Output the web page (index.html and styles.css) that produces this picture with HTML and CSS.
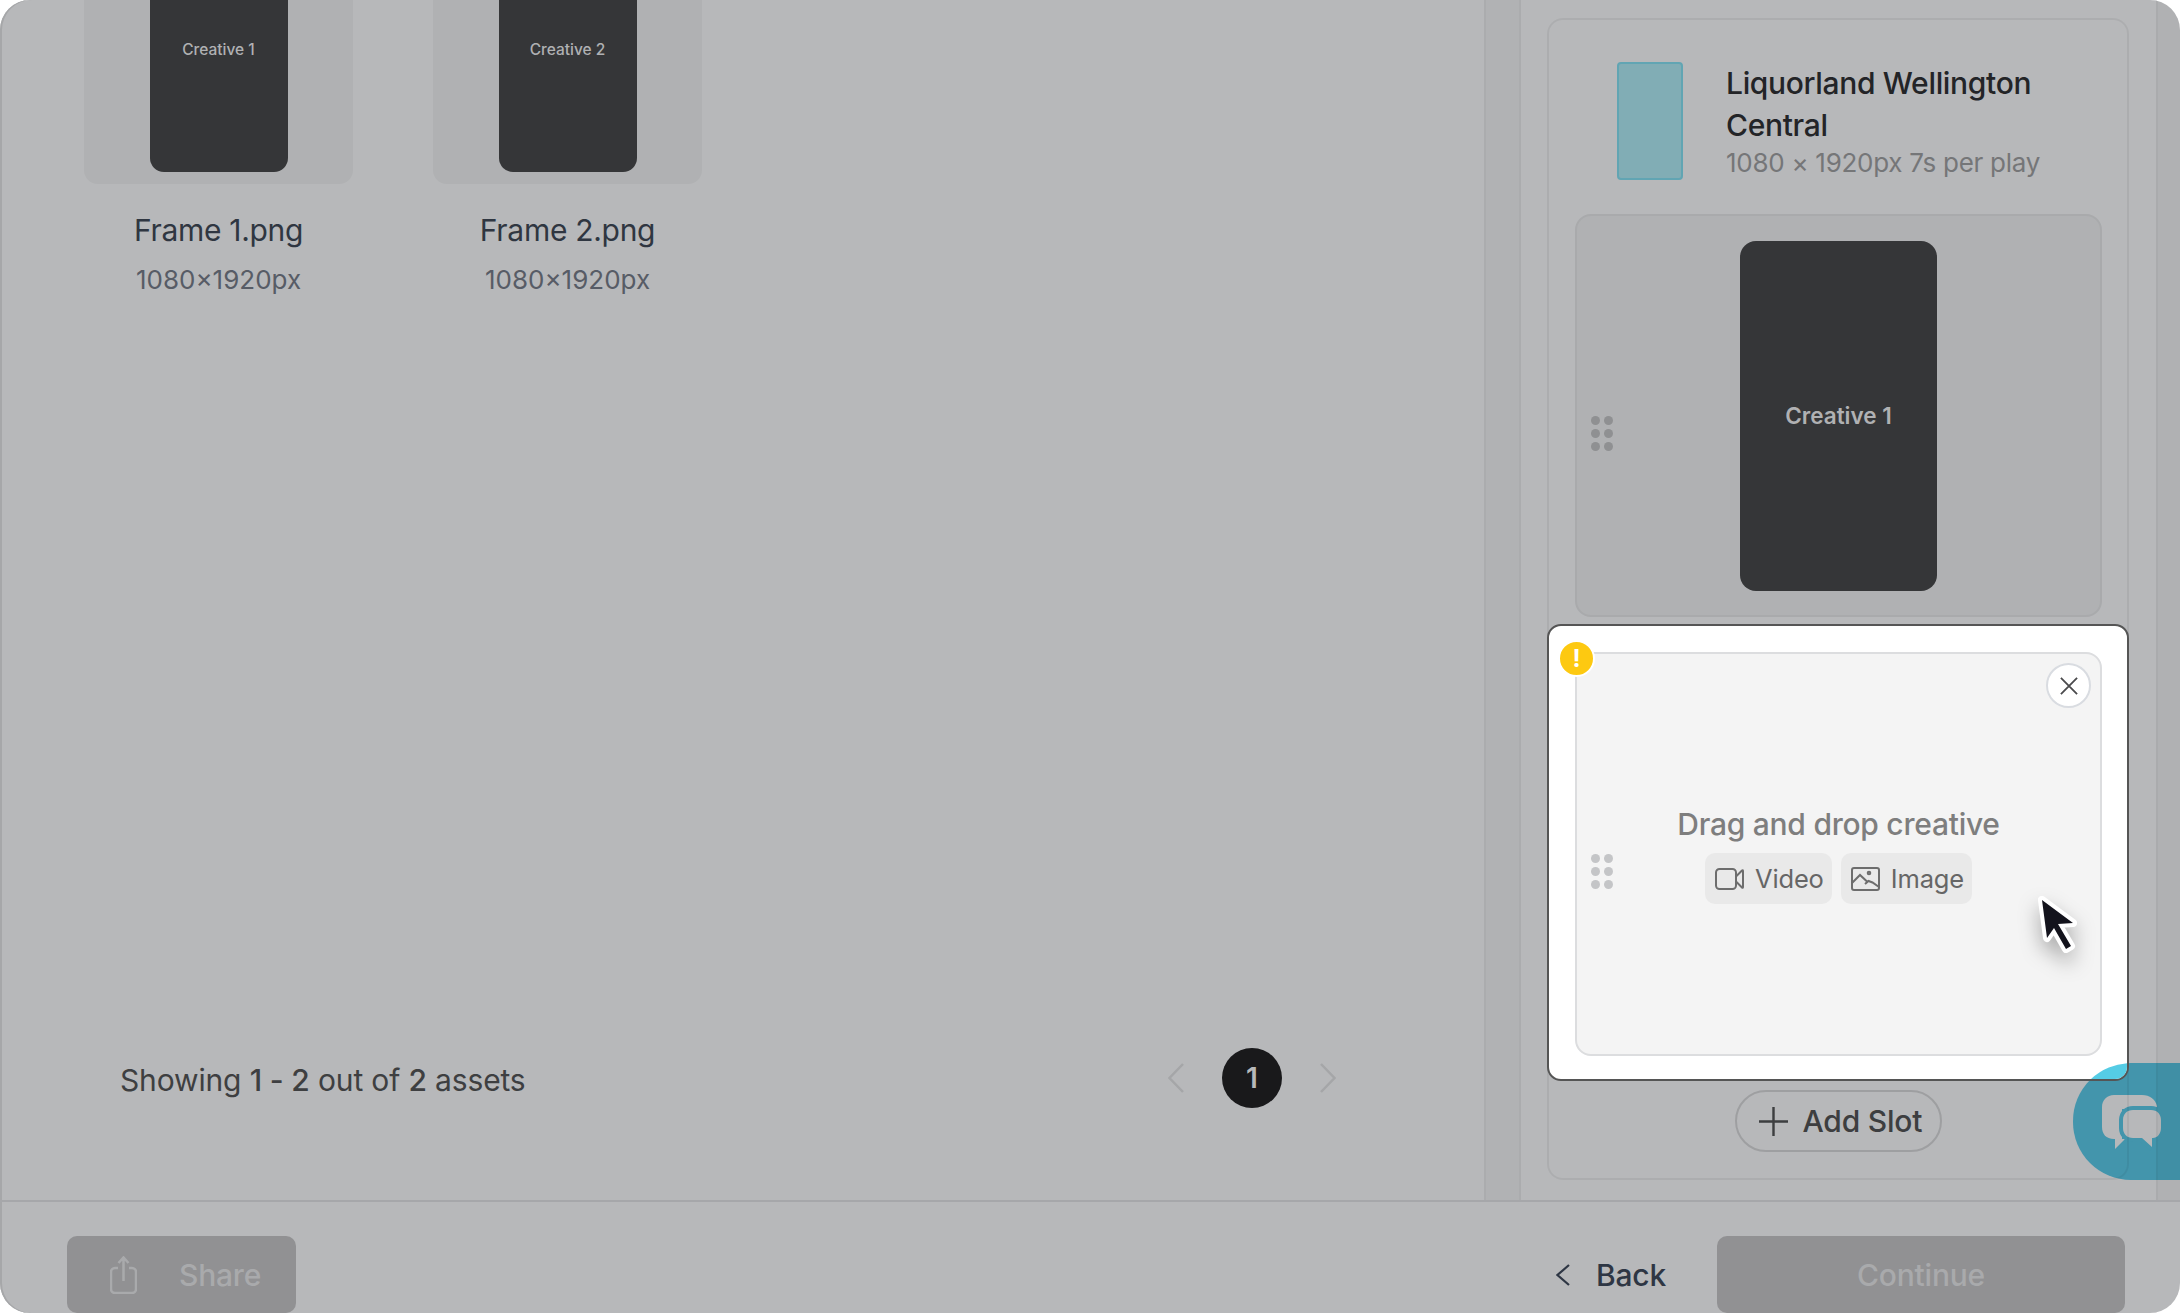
FILE: index.html
```html
<!DOCTYPE html>
<html lang="en">
<head>
<meta charset="utf-8">
<title>Creative slots</title>
<link rel="stylesheet" href="styles.css">
</head>
<body>
<div class="app">
  <div class="main">
    <section class="library">
      <div class="assets">
        <article class="asset">
          <div class="thumb"><div class="thumb-art">Creative 1</div></div>
          <div class="asset-name">Frame 1.png</div>
          <div class="asset-meta">1080×1920px</div>
        </article>
        <article class="asset">
          <div class="thumb"><div class="thumb-art">Creative 2</div></div>
          <div class="asset-name">Frame 2.png</div>
          <div class="asset-meta">1080×1920px</div>
        </article>
      </div>
      <div class="pager-row">
        <div class="showing">Showing <b>1 - 2</b> out of <b>2</b> assets</div>
        <div class="pager">
          <svg class="chev" viewBox="0 0 16 30"><path d="M15 1 1.500 15 15 29"/></svg>
          <div class="page">1</div>
          <svg class="chev" viewBox="0 0 16 30"><path d="M1 1 14.500 15 1 29"/></svg>
        </div>
      </div>
    </section>
    <div class="strip"></div>
    <aside class="panel">
      <div class="card">
        <header class="head">
          <div class="swatch"></div>
          <div class="head-text">
            <div class="title">Liquorland Wellington Central</div>
            <div class="sub">1080 × 1920px 7s per play</div>
          </div>
        </header>
        <div class="slot slot-filled">
          <div class="dots"><i></i><i></i><i></i><i></i><i></i><i></i></div>
          <div class="slot-art">Creative 1</div>
        </div>
        <div class="selected">
          <div class="chat-bright"></div>
          <div class="slot slot-empty">
            <div class="dots dots-light"><i></i><i></i><i></i><i></i><i></i><i></i></div>
            <div class="drop-title">Drag and drop creative</div>
            <div class="drop-btns">
              <div class="drop-btn">
                <svg class="ico-video" viewBox="0 0 29 22"><rect x="1" y="1" width="20" height="20" rx="3.500"/><path d="M21 8.500 27 2.500c.6-.6 1-.4 1 .5v16c0 .9-.4 1.100-1 .5L21 13.500"/></svg>
                <span>Video</span>
              </div>
              <div class="drop-btn">
                <svg class="ico-image" viewBox="0 0 29 24"><rect x="1" y="1" width="27" height="22" rx="2"/><path d="M1 16 9 8l7 6.500M14 17l3.500-3 4 1.500 6.500 4.500"/><circle cx="18" cy="6" r="1.300"/></svg>
                <span>Image</span>
              </div>
            </div>
          </div>
          <div class="warn">!</div>
          <div class="close"><svg viewBox="0 0 20 20"><path d="M1 1 19 19M19 1 1 19"/></svg></div>
        </div>
        <div class="add-slot">
          <svg viewBox="0 0 30 30"><path d="M15 0V30M0 15H30"/></svg>
          <span>Add Slot</span>
        </div>
      </div>
    </aside>
    <div class="edge"></div>
  </div>
  <footer class="footer">
    <div class="btn share">
      <svg viewBox="0 0 27 38"><path d="M8 12H5a4 4 0 0 0-4 4v17a4 4 0 0 0 4 4h17a4 4 0 0 0 4-4V16a4 4 0 0 0-4-4h-3M13.500 25V1.500M8.500 7l5-5.500 5 5.500"/></svg>
      <span>Share</span>
    </div>
    <div class="footer-right">
      <div class="back">
        <svg viewBox="0 0 14 22"><path d="M13 1 1.500 11 13 21"/></svg>
        <span>Back</span>
      </div>
      <div class="btn continue">Continue</div>
    </div>
  </footer>
  <div class="chat">
    <svg viewBox="0 0 60 56">
      <path class="chat-back" d="M12 0H40C48 0 53 4 55 11L55 14H20V44H23L13 54V44H12C4 44 0 39 0 32V12C0 5 5 0 12 0Z"/>
      <path class="chat-front" d="M31 15H49C55 15 59 19 59 25V33C59 39 55 43 51 43H50V52L40 43H31C25 43 21 39 21 33V25C21 19 25 15 31 15Z"/>
    </svg>
  </div>
  <svg class="cursor" viewBox="0 0 70 85"><path d="M22 20 53 43 38 44 51 66 46 69 34 48 27 58Z"/></svg>
</div>
</body>
</html>
```

FILE: styles.css
```css
* { box-sizing: border-box; }
html, body { margin: 0; padding: 0; background: #fff; }
body { font-family: Inter, "Liberation Sans", sans-serif; }

.app {
  position: relative;
  width: 2180px;
  height: 1313px;
  overflow: hidden;
  border-radius: 30px;
  background: #b7b8ba;
  box-shadow: inset 2px 0 0 #a6a7a9;
  display: flex;
  flex-direction: column;
}
.main { position: relative; z-index: 1; height: 1200px; display: flex; }

/* library */
.library { width: 1484px; display: flex; flex-direction: column; justify-content: space-between; }
.assets { display: flex; gap: 80px; padding-left: 84px; }
.asset { width: 269px; display: flex; flex-direction: column; align-items: center; }
.thumb {
  width: 100%;
  height: 184px;
  padding-bottom: 12px;
  display: flex;
  justify-content: center;
  background: #b0b1b3;
  border-radius: 0 0 14px 14px;
}
.thumb-art {
  width: 138px;
  padding-top: 40px;
  background: #353638;
  border-radius: 0 0 14px 14px;
  color: #b0b1b3;
  font-size: 15.500px;
  line-height: 20px;
  font-weight: 500;
  text-align: center;
}
.asset-name { margin-top: 27px; font-size: 30px; line-height: 38px; letter-spacing: -.3px; color: #2f3641; }
.asset-meta { margin-top: 13px; font-size: 26px; line-height: 36px; color: #575c66; }

.pager-row {
  display: flex;
  justify-content: space-between;
  align-items: center;
  padding: 0 148px 92px 120px;
}
.showing { padding-top: 3px; font-size: 30px; line-height: 40px; letter-spacing: -.15px; color: #3e3f41; }
.showing b { font-weight: 500; }
.pager { display: flex; align-items: center; gap: 38px; }
.chev { width: 16px; height: 30px; fill: none; stroke: #a5a6a8; stroke-width: 2.500; }
.page {
  width: 60px;
  height: 60px;
  border-radius: 50%;
  background: #19191b;
  color: #b7b8ba;
  font-size: 28px;
  font-weight: 600;
  display: flex;
  align-items: center;
  justify-content: center;
}

.strip {
  width: 37px;
  background: #b1b2b4;
  border-left: 2px solid #abacae;
  border-right: 2px solid #abacae;
}
.edge { flex: 1; background: rgba(0,0,0,.035); border-left: 2px solid rgba(0,0,0,.03); }

/* right panel */
.panel { width: 635px; padding: 18px 27px 20px 26px; display: flex; }
.card {
  width: 100%;
  border-radius: 16px;
  box-shadow: inset 0 0 0 2px rgba(0,0,0,.055);
  display: flex;
  flex-direction: column;
  align-items: stretch;
}
.head { display: flex; gap: 43px; padding: 44px 60px 34px 70px; height: 196px; }
.swatch {
  width: 66px;
  height: 118px;
  flex: none;
  background: #81adb5;
  border: 2px solid #61a5b3;
  border-radius: 4px;
}
.title { font-size: 30px; line-height: 42px; font-weight: 500; letter-spacing: -.33px; color: #232427; }
.sub { font-size: 26px; line-height: 34px; letter-spacing: -.28px; color: #757678; }

.slot { position: relative; border-radius: 16px; display: flex; flex-direction: column; align-items: center; }
.slot-filled {
  height: 403px;
  margin: 0 27px 0 28px;
  justify-content: center;
  background: #b0b1b3;
  border: 2px solid #a9aaac;
}
.slot-art {
  width: 197px;
  height: 350px;
  background: #353638;
  border-radius: 16px;
  color: #b0b1b3;
  font-size: 22.500px;
  font-weight: 600;
  display: flex;
  align-items: center;
  justify-content: center;
}
.dots {
  position: absolute;
  left: 14px;
  top: 50%;
  width: 22px;
  display: grid;
  grid-template-columns: 9px 9px;
  gap: 4px;
}
.dots i { width: 9px; height: 9px; border-radius: 50%; background: #8f9092; }
.dots-light i { background: #c4c5c7; }

.selected {
  position: relative;
  height: 457px;
  margin-top: 7px;
  padding: 26px 25px 0 26px;
  background: #fff;
  border: 2px solid #555;
  border-radius: 14px;
  overflow: hidden;
}
.chat-bright {
  position: absolute;
  left: 524px;
  top: 437px;
  width: 107px;
  height: 117px;
  border-radius: 58px 0 0 58px;
  background: #55cce5;
}
.slot-empty {
  height: 404px;
  justify-content: center;
  padding-top: 2px;
  background: #f4f4f4;
  border: 2px solid #dcdddf;
}
.drop-title { font-size: 30px; line-height: 36px; font-weight: 500; letter-spacing: -.25px; color: #7e7e7e; }
.drop-btns { display: flex; gap: 9px; margin-top: 11px; }
.drop-btn {
  height: 51px;
  padding: 0 8px 0 10px;
  display: flex;
  align-items: center;
  gap: 11px;
  background: #e9e9e9;
  border-radius: 10px;
  font-size: 25.500px;
  letter-spacing: -.15px;
  color: #666;
}
.ico-video, .ico-image { fill: none; stroke: #6d6d6d; stroke-width: 2; }
.ico-video { width: 29px; height: 22px; }
.ico-image { width: 29px; height: 24px; }
.warn {
  position: absolute;
  left: 9px;
  top: 14px;
  width: 37px;
  height: 37px;
  border: 2px solid #fff;
  border-radius: 50%;
  background: #fdc911;
  color: #fff;
  font-size: 24px;
  font-weight: 700;
  line-height: 33px;
  text-align: center;
}
.close {
  position: absolute;
  left: 497px;
  top: 37px;
  width: 45px;
  height: 45px;
  padding: 11.500px;
  background: #fff;
  border: 2px solid #d9dce1;
  border-radius: 50%;
  display: flex;
}
.close svg { width: 100%; height: 100%; fill: none; stroke: #4a4a4c; stroke-width: 2; }

.add-slot {
  align-self: center;
  width: 207px;
  height: 62px;
  margin-top: 9px;
  padding-left: 22px;
  display: flex;
  align-items: center;
  gap: 15px;
  border: 2px solid #9e9fa1;
  border-radius: 31px;
  font-size: 30px;
  font-weight: 500;
  letter-spacing: -.2px;
  color: #3d3e40;
}
.add-slot svg { width: 29px; height: 29px; fill: none; stroke: #3d3e40; stroke-width: 2.500; }

/* footer */
.footer {
  position: relative;
  z-index: 1;
  height: 113px;
  padding: 34px 55px 0 67px;
  border-top: 2px solid #a6a7aa;
  display: flex;
  justify-content: space-between;
}
.btn {
  height: 77px;
  border-radius: 10px;
  background: #919193;
  color: #a9aaac;
  font-size: 30px;
  font-weight: 500;
  letter-spacing: -.2px;
  display: flex;
  align-items: center;
}
.share { width: 229px; padding-left: 43px; gap: 42px; }
.share svg { width: 27px; height: 38px; fill: none; stroke: #a9aaac; stroke-width: 2.500; }
.footer-right { display: flex; gap: 51px; }
.back { display: flex; align-items: center; gap: 26px; font-size: 30px; font-weight: 500; letter-spacing: -.2px; color: #2e3644; }
.back svg { width: 14px; height: 22px; fill: none; stroke: #2e3644; stroke-width: 2.200; }
.continue { width: 408px; justify-content: center; }

/* floating */
.chat {
  position: absolute;
  right: 0;
  top: 1063px;
  width: 107px;
  height: 117px;
  padding: 32px 0 0 29px;
  border-radius: 58px 0 0 58px;
  background: #4395ac;
}
.chat svg { width: 60px; height: 56px; display: block; }
.chat-back { fill: #b7b8ba; }
.chat-front { fill: #b7b8ba; stroke: #4395ac; stroke-width: 8; paint-order: stroke; }
.cursor {
  position: absolute;
  z-index: 2;
  left: 2020px;
  top: 880px;
  width: 70px;
  height: 85px;
  fill: #13131c;
  stroke: #fff;
  stroke-width: 8;
  stroke-linejoin: round;
  paint-order: stroke;
  filter: drop-shadow(0 10px 10px rgba(0,0,0,.3));
}
```
